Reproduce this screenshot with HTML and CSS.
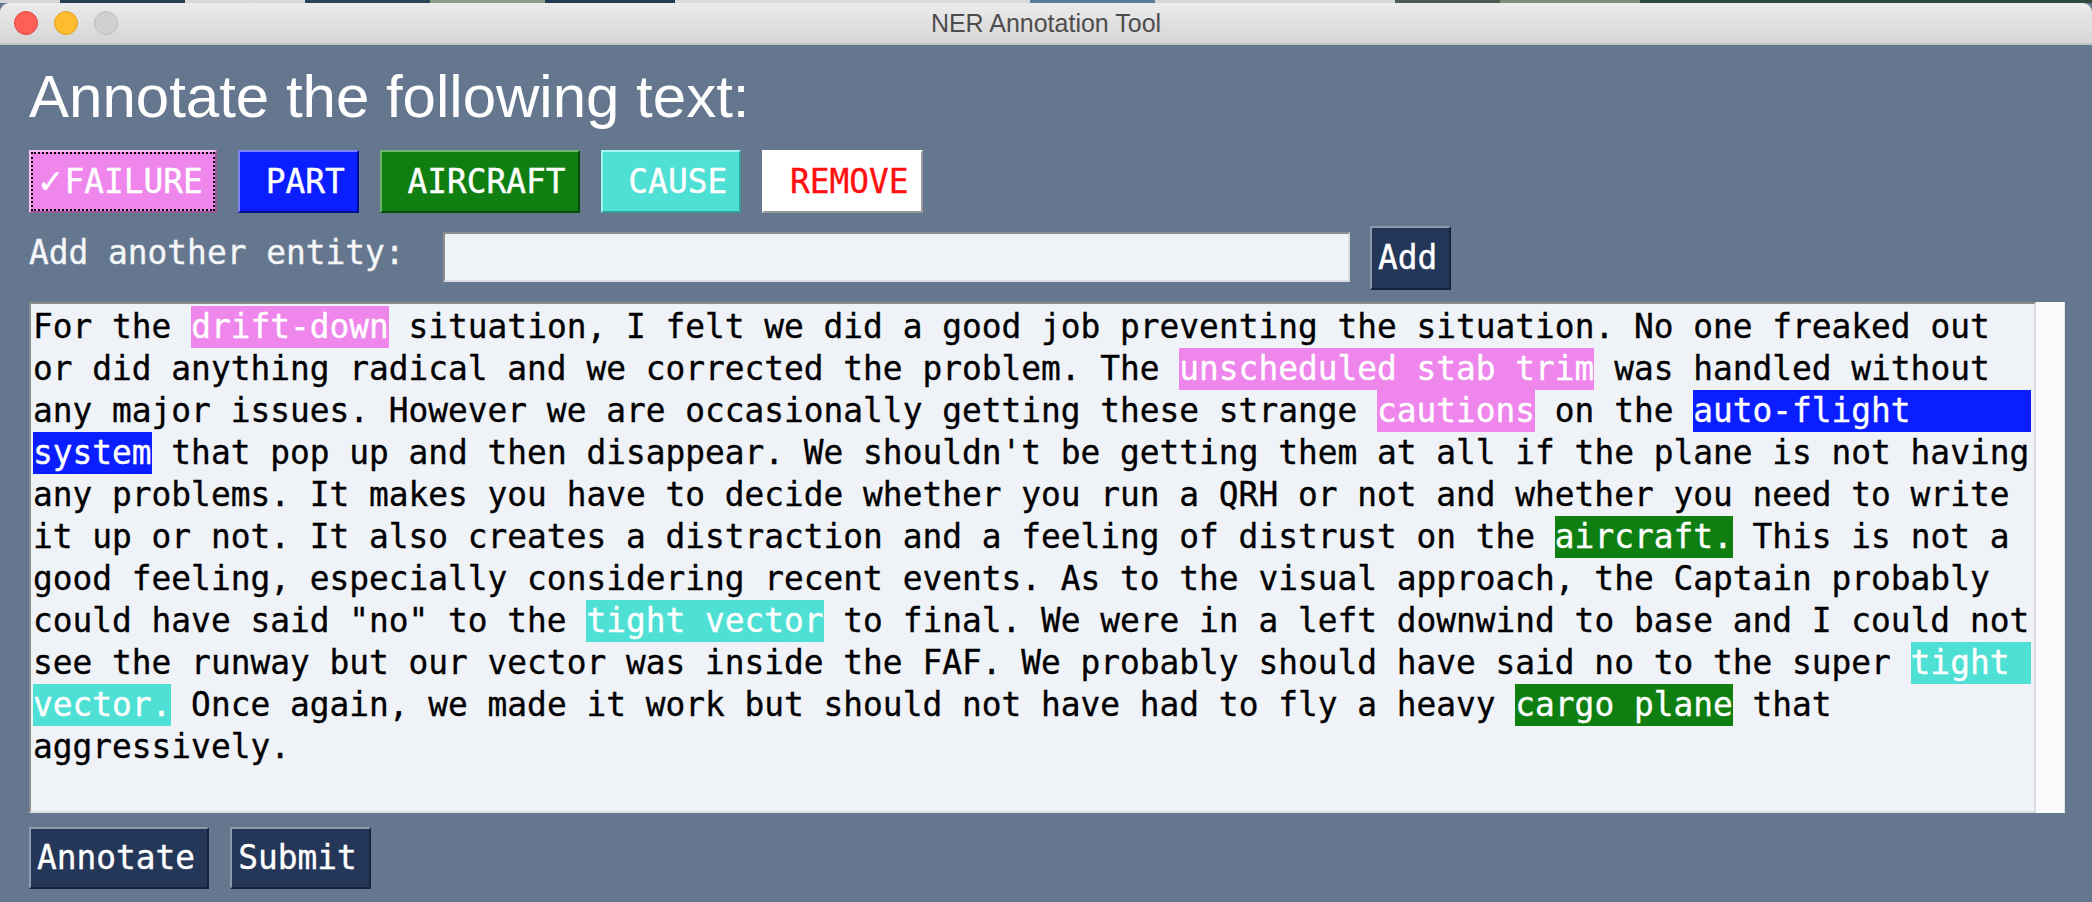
FILE: index.html
```html
<!DOCTYPE html>
<html lang="en">
<head>
<meta charset="utf-8">
<title>NER Annotation Tool</title>
<link rel="stylesheet" href="styles.css">
</head>
<body>
<div class="desk"></div>
<header class="titlebar">
  <div class="lights"><span class="light red"></span><span class="light yellow"></span><span class="light gray"></span></div>
  <div class="title">NER Annotation Tool</div>
  <div></div>
</header>
<main class="app">
  <h1 class="heading">Annotate the following text:</h1>
  <div class="tags">
    <button class="tag failure"><span class="check">✓</span>FAILURE</button>
    <button class="tag part"> PART</button>
    <button class="tag aircraft"> AIRCRAFT</button>
    <button class="tag cause"> CAUSE</button>
    <button class="tag remove"> REMOVE</button>
  </div>
  <div class="addrow">
    <label class="addlabel" for="entity">Add another entity:</label>
    <input class="entry" id="entity" type="text">
    <button class="dark add">Add</button>
  </div>
  <div class="textrow">
    <div class="textbox">
<div class="ln">For the <span class="hl failure">drift-down</span> situation, I felt we did a good job preventing the situation. No one freaked out</div>
<div class="ln">or did anything radical and we corrected the problem. The <span class="hl failure">unscheduled stab trim</span> was handled without</div>
<div class="ln ln-flex"><span>any major issues. However we are occasionally getting these strange </span><span class="hl failure">cautions</span><span> on the </span><span class="hl part grow">auto-flight</span></div>
<div class="ln"><span class="hl part">system</span> that pop up and then disappear. We shouldn't be getting them at all if the plane is not having</div>
<div class="ln">any problems. It makes you have to decide whether you run a QRH or not and whether you need to write</div>
<div class="ln">it up or not. It also creates a distraction and a feeling of distrust on the <span class="hl aircraft">aircraft.</span> This is not a</div>
<div class="ln">good feeling, especially considering recent events. As to the visual approach, the Captain probably</div>
<div class="ln">could have said "no" to the <span class="hl cause">tight vector</span> to final. We were in a left downwind to base and I could not</div>
<div class="ln ln-flex"><span>see the runway but our vector was inside the FAF. We probably should have said no to the super </span><span class="hl cause grow">tight</span></div>
<div class="ln"><span class="hl cause">vector.</span> Once again, we made it work but should not have had to fly a heavy <span class="hl aircraft">cargo plane</span> that</div>
<div class="ln">aggressively.</div>
    </div>
    <div class="scroll"></div>
  </div>
  <div class="actions">
    <button class="dark">Annotate</button>
    <button class="dark">Submit</button>
  </div>
</main>
</body>
</html>
```

FILE: styles.css
```css
* { box-sizing: border-box; }

html, body { margin: 0; padding: 0; }

body {
  width: 2092px;
  height: 902px;
  overflow: hidden;
  background: #65778f;
  font-family: "DejaVu Sans Mono", "Liberation Mono", monospace;
}

.desk {
  height: 3px;
  background: linear-gradient(90deg,
    #d4d6d8 0 60px, #27414f 60px 185px, #d8dadc 185px 305px,
    #2b4656 305px 430px, #8e9f86 430px 545px, #1f3c55 545px 675px,
    #d9dbdd 675px 1030px, #5a7a96 1030px 1155px, #d6d8da 1155px 1395px,
    #4f5a55 1395px 1500px, #7c8f7a 1500px 1640px, #2f4a3c 1640px 2092px);
}

.titlebar {
  height: 42px;
  display: grid;
  grid-template-columns: 1fr auto 1fr;
  align-items: center;
  background: linear-gradient(#ececec, #d5d5d5);
  border-bottom: 2px solid #c4c4c4;
  border-radius: 9px 9px 0 0;
}

.lights {
  display: flex;
  gap: 16px;
  padding-left: 14px;
}

.light {
  width: 24px;
  height: 24px;
  border-radius: 50%;
  border: 1px solid;
}
.light.red { background: #fe5f57; border-color: #e0443e; }
.light.yellow { background: #febc2e; border-color: #dea123; }
.light.gray { background: #d0d0d0; border-color: #bcbcbc; }

.title {
  font-family: "Liberation Sans", Arial, sans-serif;
  font-size: 25px;
  color: #4d4d4d;
  padding-top: 1px;
}

.app {
  padding: 0 27px 0 29px;
}

.heading {
  margin: 19px 0 0;
  font-family: "Liberation Sans", Arial, sans-serif;
  font-weight: 400;
  font-size: 60px;
  line-height: 66px;
  color: #ffffff;
}

.tags {
  display: flex;
  gap: 21px;
  margin-top: 20px;
}

button {
  margin: 0;
  font-family: "DejaVu Sans Mono", "Liberation Mono", monospace;
  font-size: 32.85px;
  white-space: pre;
  border-style: solid;
  border-width: 2px;
  padding: 0 12px 0 6px;
  cursor: pointer;
  -webkit-text-stroke: 0.35px currentColor;
}

.tag {
  height: 63px;
  color: #ffffff;
}

.check {
  font-family: "DejaVu Sans", sans-serif;
  font-weight: 700;
}

.tag.failure {
  background: #ee86ec;
  border-color: #f7bdf6 #9e569d #9e569d #f7bdf6;
  outline: 2px dotted #000;
  outline-offset: -4px;
}
.tag.part {
  background: #0a1eff;
  border-color: #7a84ff #00108c #00108c #7a84ff;
}
.tag.aircraft {
  background: #0f7f12;
  border-color: #6cb46c #064c08 #064c08 #6cb46c;
}
.tag.cause {
  background: #4ee0d4;
  border-color: #a2f6ef #399c95 #399c95 #a2f6ef;
}
.tag.remove {
  background: #ffffff;
  color: #ff1010;
  border-color: #ffffff #9a9a9a #9a9a9a #ffffff;
}

.addrow {
  display: flex;
  align-items: flex-start;
  margin-top: 13px;
}

.addlabel {
  margin-top: 8px;
  width: 414px;
  font-size: 32.85px;
  line-height: 38px;
  color: #f4f6f8;
  white-space: pre;
  -webkit-text-stroke: 0.35px currentColor;
}

.entry {
  margin: 6px 0 0;
  width: 907px;
  height: 50px;
  border: 2px solid;
  border-color: #8c8c8c #dadde2 #dadde2 #8c8c8c;
  background: #eff2f7;
  padding: 0 6px;
  font-family: "DejaVu Sans Mono", monospace;
  font-size: 30px;
  outline: none;
}

.dark {
  height: 62px;
  background: #253759;
  color: #ffffff;
  border-color: #8d99ab #17223a #17223a #8d99ab;
}

.dark.add {
  height: 64px;
  margin-left: 20px;
}

.textrow {
  display: flex;
  margin-top: 12px;
  height: 511px;
}

.textbox {
  width: 2007px;
  height: 511px;
  overflow: hidden;
  border: 2px solid;
  border-color: #8c8c8c #d9dce1 #d9dce1 #8c8c8c;
  background: #eff2f7;
  padding: 2px 0 0 2px;
  color: #000000;
  font-size: 32.85px;
  line-height: 42px;
  -webkit-text-stroke: 0.35px currentColor;
}

.ln {
  height: 42px;
  white-space: pre;
}

.ln-flex {
  display: flex;
}

.hl {
  display: inline-block;
  height: 42px;
  color: #ffffff;
}
.hl.failure { background: #ee86ec; }
.hl.part { background: #0a1eff; }
.hl.aircraft { background: #0f7f12; }
.hl.cause { background: #4ee0d4; }

.grow {
  flex: 1;
  margin-right: 3px;
}

.scroll {
  width: 29px;
  height: 511px;
  background: #fafafa;
  border-right: 1px solid #e3e3e3;
}

.actions {
  display: flex;
  gap: 21px;
  margin-top: 14px;
}
```
